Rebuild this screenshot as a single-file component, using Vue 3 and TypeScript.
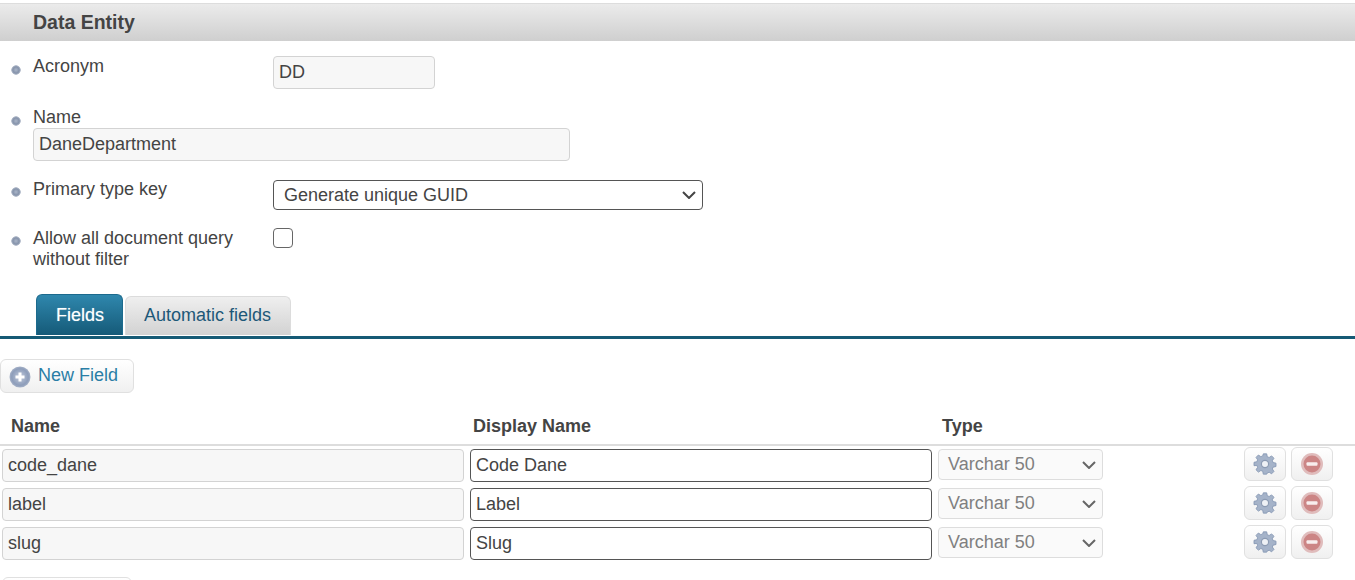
<template>
  <div class="page">
    <h2 class="title">Data Entity</h2>

    <ul class="form">
      <li class="row row-acronym">
        <label class="label">Acronym</label>
        <input class="input short" value="DD" readonly />
      </li>
      <li class="row row-name">
        <div class="stack">
          <label class="label">Name</label>
          <input class="input wide" value="DaneDepartment" readonly />
        </div>
      </li>
      <li class="row row-key">
        <label class="label">Primary type key</label>
        <div class="select key-select">
          <span>Generate unique GUID</span>
          <svg class="chevron" width="14" height="8" viewBox="0 0 14 8"><path d="M1 1l6 6 6-6" /></svg>
        </div>
      </li>
      <li class="row row-query">
        <label class="label">Allow all document query<br />without filter</label>
        <span class="checkbox"></span>
      </li>
    </ul>

    <div class="tabs">
      <button class="tab active">Fields</button>
      <button class="tab">Automatic fields</button>
    </div>

    <button class="action new-field">
      <svg width="22" height="22" viewBox="0 0 22 22">
        <defs>
          <radialGradient id="plusFill" cx="50%" cy="50%" r="55%">
            <stop offset="0" stop-color="#c2cbdc" />
            <stop offset="0.72" stop-color="#8d9dba" />
            <stop offset="1" stop-color="#b1bbcd" />
          </radialGradient>
        </defs>
        <circle cx="11" cy="11" r="10.5" fill="url(#plusFill)" />
        <path d="M11 6.5v9M6.5 11h9" stroke="#fff" stroke-width="3" />
      </svg>
      <span>New Field</span>
    </button>

    <div class="grid head">
      <span>Name</span>
      <span>Display Name</span>
      <span>Type</span>
    </div>

    <div v-for="f in fields" :key="f.name" class="grid field">
      <input class="input locked" :value="f.name" readonly />
      <input class="input open" :value="f.display" readonly />
      <div class="select type-select">
        <span>{{ f.type }}</span>
        <svg class="chevron" width="14" height="8" viewBox="0 0 14 8"><path d="M1 1l6 6 6-6" /></svg>
      </div>
      <div class="buttons">
        <button class="icon-btn">
          <svg class="soft" width="26" height="26" viewBox="0 0 26 26">
            <path
              class="gear"
              d="M11 1h4l.7 3.4 2.2.9 2.9-1.9 2.8 2.8-1.9 2.9.9 2.2 3.4.7v4l-3.4.7-.9 2.2 1.9 2.9-2.8 2.8-2.9-1.9-2.2.9L15 25h-4l-.7-3.4-2.2-.9-2.9 1.9-2.8-2.8 1.9-2.9-.9-2.2L0 15v-4l3.4-.7.9-2.2L2.4 5.2l2.8-2.8 2.9 1.9 2.2-.9z"
              transform="translate(2 2) scale(.846)"
            />
            <circle cx="13" cy="13" r="3.6" fill="#eef1f5" stroke="#8c9bb3" stroke-width="1.2" />
          </svg>
        </button>
        <button class="icon-btn">
          <svg class="soft" width="24" height="24" viewBox="0 0 24 24">
            <circle cx="12" cy="12" r="11" fill="#e0bcbc" />
            <circle cx="12" cy="12" r="8.5" fill="#cc8585" />
            <rect x="6.5" y="10.2" width="11" height="3.6" rx="1" fill="#f8eeee" />
          </svg>
        </button>
      </div>
    </div>

    <button class="action bottom"></button>
  </div>
</template>

<script setup lang="ts">
interface Field {
  name: string
  display: string
  type: string
}

const fields: Field[] = [
  { name: 'code_dane', display: 'Code Dane', type: 'Varchar 50' },
  { name: 'label', display: 'Label', type: 'Varchar 50' },
  { name: 'slug', display: 'Slug', type: 'Varchar 50' },
]
</script>

<style>
html,
body {
  background: #fff;
  overflow: hidden;
}
</style>

<style scoped>
.page {
  height: 580px;
  overflow: hidden;
  padding-top: 3px;
  box-sizing: border-box;
  font-family: "Liberation Sans", Arial, sans-serif;
  font-size: 18px;
  color: #444;
}

.title {
  margin: 0;
  height: 38px;
  box-sizing: border-box;
  padding-left: 33px;
  border-top: 1px solid #ddd;
  background: linear-gradient(#ebebeb, #cfcfcf);
  font-size: 19.5px;
  line-height: 36px;
  font-weight: bold;
  color: #444;
}

.form {
  list-style: none;
  margin: 0;
  padding: 0;
}

.row {
  display: flex;
  align-items: flex-start;
  padding-left: 33px;
  background: radial-gradient(circle closest-side at 50% 50%, #aab5c8, #8492aa 65%, #b9c1cf 90%, transparent 100%) no-repeat 11px 0 / 10px 10px;
  line-height: 21px;
}

.row-acronym {
  margin-top: 15px;
  height: 33px;
  background-position: 11px 9px;
}

.row-name {
  margin-top: 18px;
  height: 73px;
  background-position: 11px 9px;
}

.row-key {
  margin-top: 0;
  height: 30px;
  background-position: 11px 7px;
}

.row-query {
  margin-top: 18px;
  height: 45px;
  background-position: 11px 8px;
}

.label {
  display: block;
  width: 240px;
  flex: none;
}

.row-key .label {
  margin-top: -1px;
}

.stack .label {
  width: auto;
}

.input {
  display: block;
  box-sizing: border-box;
  height: 33px;
  padding: 0 5px;
  border: 1px solid #d3d3d3;
  border-radius: 4px;
  background: #f7f7f7;
  font: inherit;
  color: #444;
  outline: none;
}

.short {
  width: 162px;
}

.wide {
  width: 537px;
}

.select {
  display: flex;
  align-items: center;
  justify-content: space-between;
  box-sizing: border-box;
  border-radius: 4px;
}

.key-select {
  width: 430px;
  height: 30px;
  padding: 0 6px 0 10px;
  border: 1px solid #555;
  color: #444;
}

.chevron {
  fill: none;
  stroke: #444;
  stroke-width: 2;
}

.checkbox {
  display: block;
  box-sizing: border-box;
  width: 20px;
  height: 20px;
  border: 1.5px solid #666;
  border-radius: 4px;
}

.tabs {
  display: flex;
  align-items: flex-end;
  gap: 2px;
  height: 41px;
  margin-top: 21px;
  padding-left: 36px;
  padding-bottom: 1px;
  border-bottom: 3px solid #155a75;
}

.tab {
  height: 39px;
  padding: 0 19px 2px 18px;
  border: 1px solid #dcdcdc;
  border-bottom: 0;
  border-radius: 6px 6px 0 0;
  background: linear-gradient(#efefef, #d2d2d2);
  font: inherit;
  color: #1d5878;
}

.tab.active {
  height: 41px;
  padding: 0 18px 0 19px;
  border-color: #1c6a8d;
  background: linear-gradient(#2f87ad, #155a78);
  color: #fff;
  text-shadow: 0 0 1px rgba(255, 255, 255, .5);
}

.action {
  display: flex;
  align-items: center;
  box-sizing: border-box;
  width: 134px;
  height: 34px;
  padding: 0 0 0 8px;
  border: 1px solid #e0e0e0;
  border-radius: 6px;
  background: linear-gradient(#fff, #f0f0f0);
  font: inherit;
  color: #2a7ea6;
}

.new-field {
  gap: 7px;
  margin-top: 20px;
  padding-bottom: 2px;
}

.new-field svg {
  margin-top: 3px;
}

.grid {
  display: grid;
  grid-template-columns: 462px 462px 165px 1fr;
  column-gap: 6px;
  padding-left: 2px;
}

.head {
  height: 53px;
  box-sizing: border-box;
  padding-top: 23px;
  border-bottom: 2px solid #ddd;
  font-weight: bold;
  line-height: 20px;
  grid-template-columns: 456px 463px 1fr;
  padding-left: 11px;
}

.field {
  margin-top: 3px;
  height: 36px;
}

.open {
  width: 100%;
  border-color: #555;
  background: #fff;
}

.locked {
  width: 100%;
}

.type-select {
  height: 31px;
  padding: 0 6px 0 9px;
  border: 1px solid #ddd;
  background: #fafafa;
  color: #808080;
}

.type-select .chevron {
  stroke: #666;
}

.buttons {
  display: flex;
  gap: 5px;
  margin-left: 135px;
  margin-top: -2px;
}

.icon-btn {
  display: flex;
  align-items: center;
  justify-content: center;
  box-sizing: border-box;
  width: 42px;
  height: 34px;
  padding: 0;
  border: 1px solid #e0e0e0;
  border-radius: 6px;
  background: linear-gradient(#fff, #f0f0f0);
}

.soft {
  filter: blur(.4px);
}

.gear {
  fill: #a5b3c9;
  stroke: #8496b2;
  stroke-width: 1;
}

.bottom {
  margin: 14px 0 0 2px;
  width: 130px;
  flex: none;
}
</style>
